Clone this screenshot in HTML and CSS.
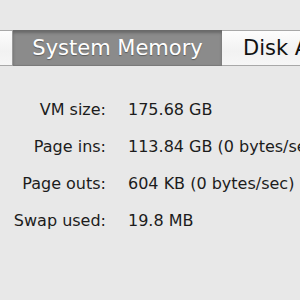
FILE: index.html
```html
<!DOCTYPE html>
<html lang="en">
<head>
    <meta charset="UTF-8">
    <title>Activity Monitor</title>
    <link rel="stylesheet" href="styles.css">
</head>
<body>
    <div class="tabs">
        <div class="tab tab-edge"></div>
        <div class="tab tab-active">System Memory</div>
        <div class="tab">Disk Activity</div>
    </div>

    <div class="stats">
        <span class="label">VM size:</span>
        <span class="value">175.68 GB</span>
        <span class="label">Page ins:</span>
        <span class="value">113.84 GB (0 bytes/sec)</span>
        <span class="label">Page outs:</span>
        <span class="value">604 KB (0 bytes/sec)</span>
        <span class="label">Swap used:</span>
        <span class="value">19.8 MB</span>
    </div>
</body>
</html>
```

FILE: styles.css
```css
* {
    margin: 0;
    padding: 0;
    box-sizing: border-box;
}

body {
    background: #e8e8e8;
    font-family: 'DejaVu Sans', sans-serif;
    color: #1c1c1c;
    width: 300px;
    height: 300px;
    overflow: hidden;
    padding-top: 30px;
}

.tabs {
    display: flex;
    height: 36px;
    white-space: nowrap;
}

.tab {
    flex-shrink: 0;
    display: flex;
    align-items: center;
    height: 36px;
    padding: 0 21px;
    font-size: 21px;
    background: linear-gradient(#fdfdfd, #f2f2f2 60%, #f6f6f6);
    border-top: 1px solid #a8a8a8;
    border-bottom: 1px solid #a8a8a8;
    color: #111;
}

.tab-edge {
    width: 13px;
    padding: 0;
    border-right: 1px solid #9a9a9a;
}

.tab-active {
    width: 209px;
    justify-content: center;
    background: #8b8b8b;
    color: #fff;
    border-top-color: #6a6a6a;
    border-bottom-color: #7a7a7a;
    box-shadow: inset 0 2px 3px rgba(0, 0, 0, 0.25);
    text-shadow: 0 1px 1px rgba(0, 0, 0, 0.35);
}

.stats {
    display: grid;
    grid-template-columns: 106px auto;
    column-gap: 22px;
    row-gap: 18px;
    margin-top: 34px;
    font-size: 16px;
    line-height: 19px;
    white-space: nowrap;
}

.label {
    text-align: right;
}
```
